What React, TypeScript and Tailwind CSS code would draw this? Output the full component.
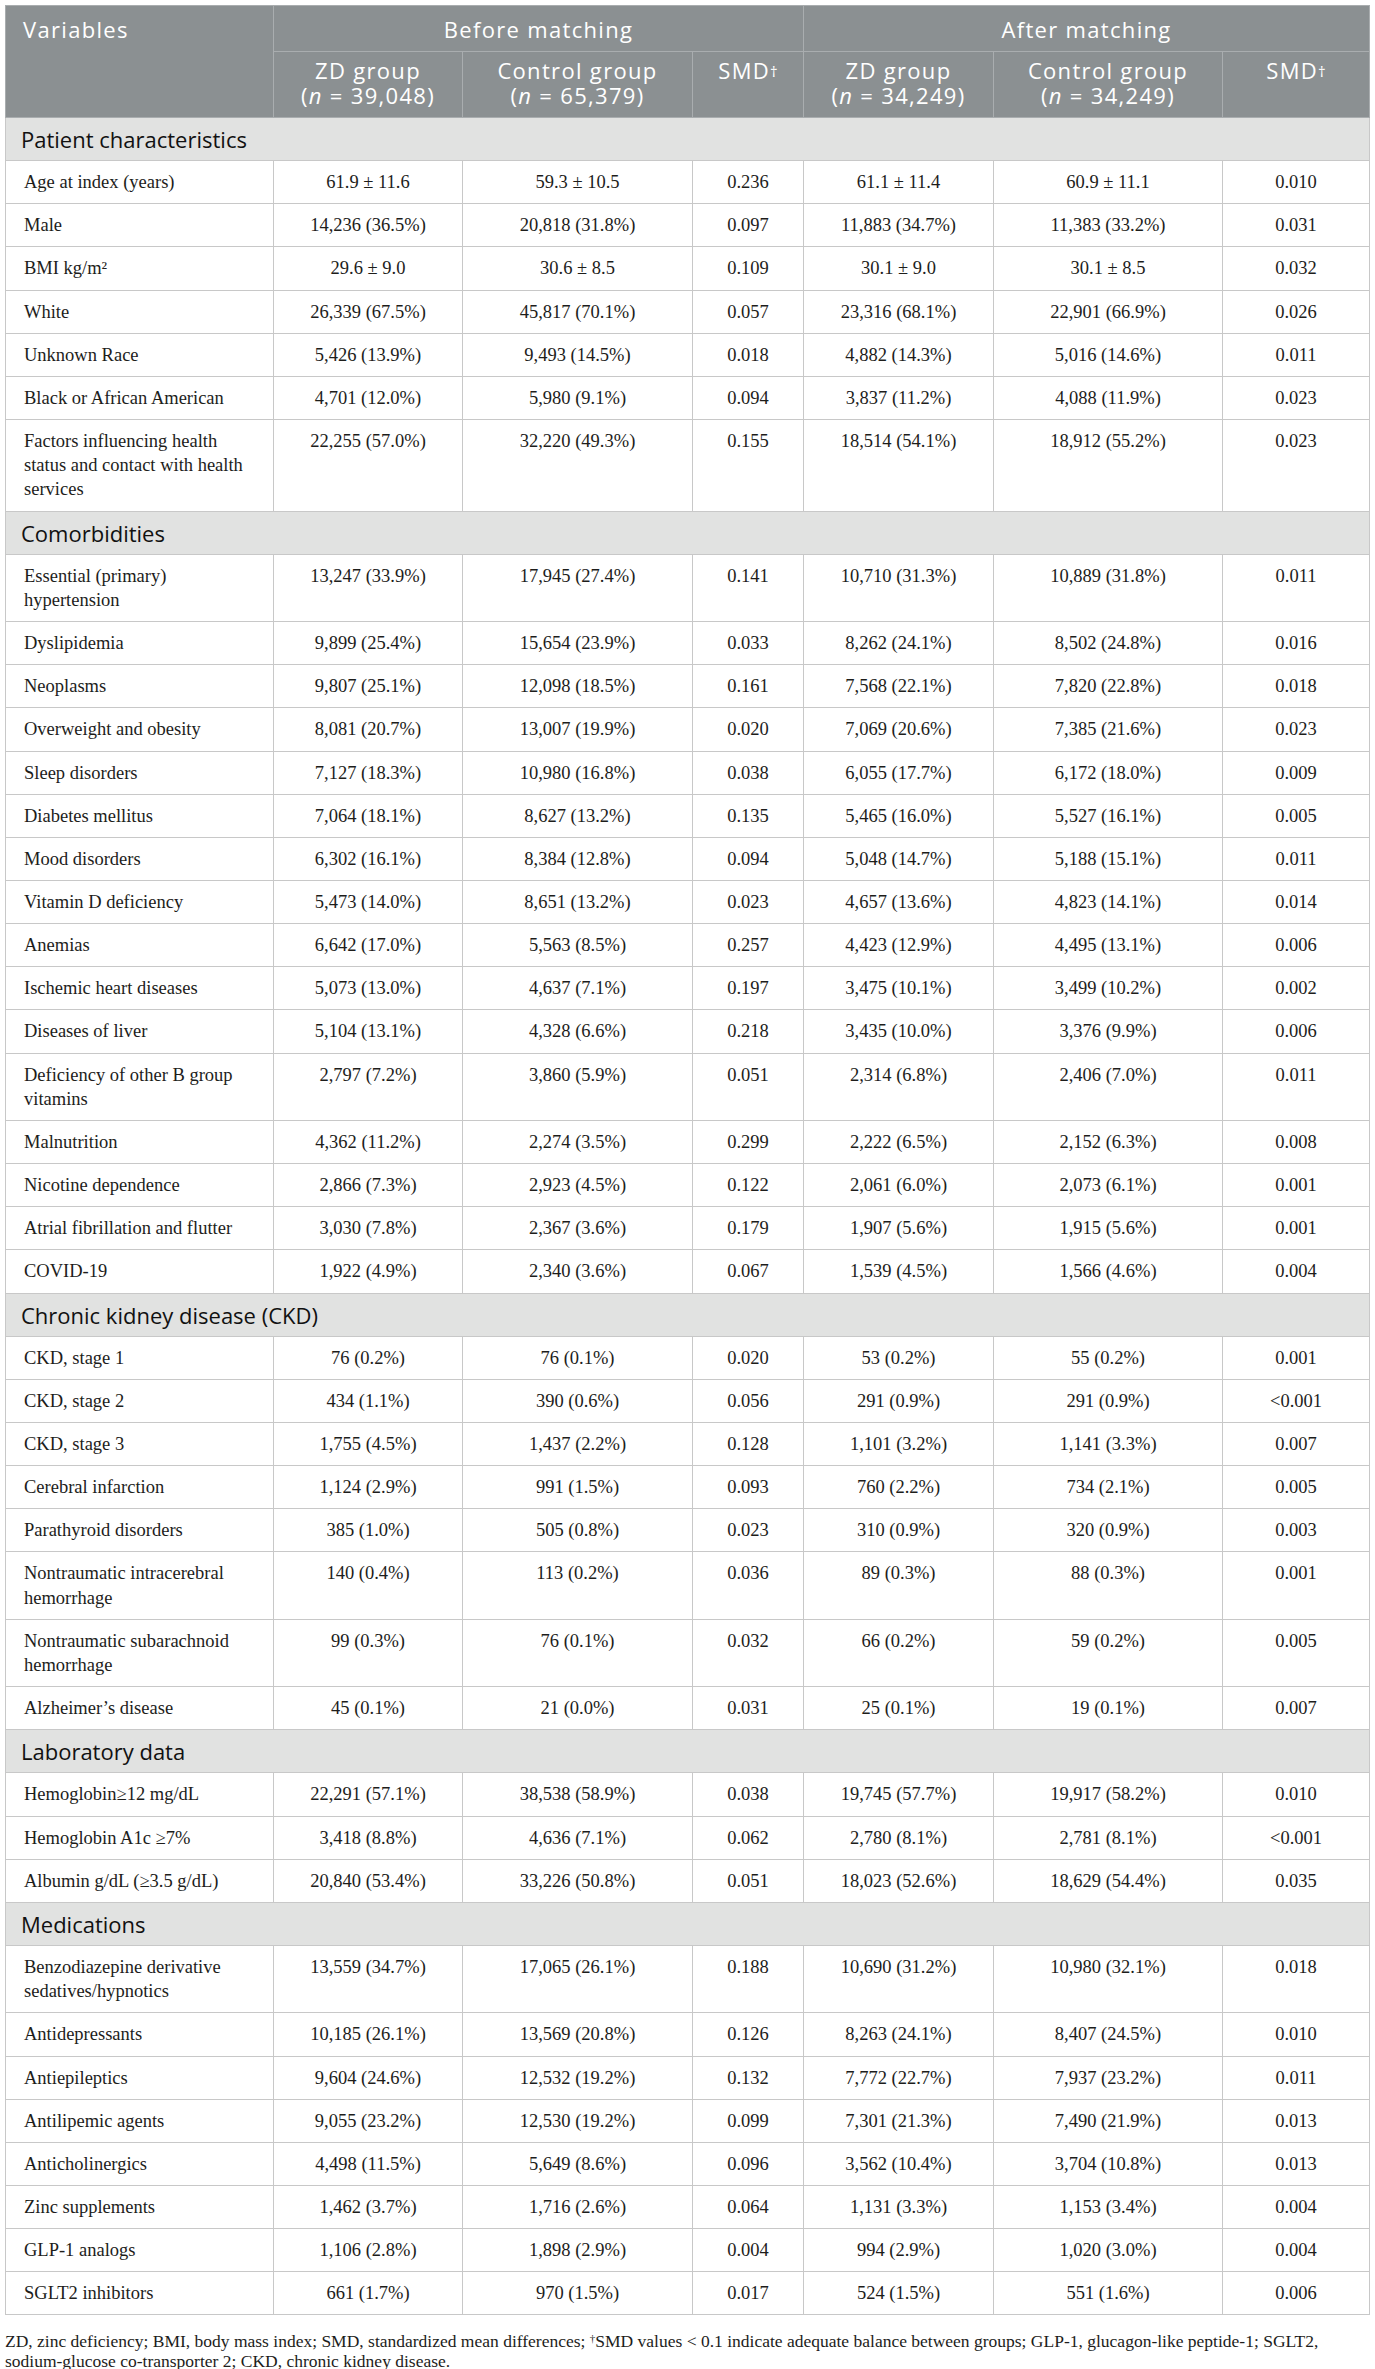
import React from "react";

type Row = { label: string[]; v: string[] };
type Section = { title: string; rows: Row[] };

const sections: Section[] = [
  {
    title: "Patient characteristics",
    rows: [
      { label: ["Age at index (years)"], v: ["61.9 ± 11.6", "59.3 ± 10.5", "0.236", "61.1 ± 11.4", "60.9 ± 11.1", "0.010"] },
      { label: ["Male"], v: ["14,236 (36.5%)", "20,818 (31.8%)", "0.097", "11,883 (34.7%)", "11,383 (33.2%)", "0.031"] },
      { label: ["BMI kg/m²"], v: ["29.6 ± 9.0", "30.6 ± 8.5", "0.109", "30.1 ± 9.0", "30.1 ± 8.5", "0.032"] },
      { label: ["White"], v: ["26,339 (67.5%)", "45,817 (70.1%)", "0.057", "23,316 (68.1%)", "22,901 (66.9%)", "0.026"] },
      { label: ["Unknown Race"], v: ["5,426 (13.9%)", "9,493 (14.5%)", "0.018", "4,882 (14.3%)", "5,016 (14.6%)", "0.011"] },
      { label: ["Black or African American"], v: ["4,701 (12.0%)", "5,980 (9.1%)", "0.094", "3,837 (11.2%)", "4,088 (11.9%)", "0.023"] },
      {
        label: ["Factors influencing health", "status and contact with health", "services"],
        v: ["22,255 (57.0%)", "32,220 (49.3%)", "0.155", "18,514 (54.1%)", "18,912 (55.2%)", "0.023"],
      },
    ],
  },
  {
    title: "Comorbidities",
    rows: [
      { label: ["Essential (primary)", "hypertension"], v: ["13,247 (33.9%)", "17,945 (27.4%)", "0.141", "10,710 (31.3%)", "10,889 (31.8%)", "0.011"] },
      { label: ["Dyslipidemia"], v: ["9,899 (25.4%)", "15,654 (23.9%)", "0.033", "8,262 (24.1%)", "8,502 (24.8%)", "0.016"] },
      { label: ["Neoplasms"], v: ["9,807 (25.1%)", "12,098 (18.5%)", "0.161", "7,568 (22.1%)", "7,820 (22.8%)", "0.018"] },
      { label: ["Overweight and obesity"], v: ["8,081 (20.7%)", "13,007 (19.9%)", "0.020", "7,069 (20.6%)", "7,385 (21.6%)", "0.023"] },
      { label: ["Sleep disorders"], v: ["7,127 (18.3%)", "10,980 (16.8%)", "0.038", "6,055 (17.7%)", "6,172 (18.0%)", "0.009"] },
      { label: ["Diabetes mellitus"], v: ["7,064 (18.1%)", "8,627 (13.2%)", "0.135", "5,465 (16.0%)", "5,527 (16.1%)", "0.005"] },
      { label: ["Mood disorders"], v: ["6,302 (16.1%)", "8,384 (12.8%)", "0.094", "5,048 (14.7%)", "5,188 (15.1%)", "0.011"] },
      { label: ["Vitamin D deficiency"], v: ["5,473 (14.0%)", "8,651 (13.2%)", "0.023", "4,657 (13.6%)", "4,823 (14.1%)", "0.014"] },
      { label: ["Anemias"], v: ["6,642 (17.0%)", "5,563 (8.5%)", "0.257", "4,423 (12.9%)", "4,495 (13.1%)", "0.006"] },
      { label: ["Ischemic heart diseases"], v: ["5,073 (13.0%)", "4,637 (7.1%)", "0.197", "3,475 (10.1%)", "3,499 (10.2%)", "0.002"] },
      { label: ["Diseases of liver"], v: ["5,104 (13.1%)", "4,328 (6.6%)", "0.218", "3,435 (10.0%)", "3,376 (9.9%)", "0.006"] },
      { label: ["Deficiency of other B group", "vitamins"], v: ["2,797 (7.2%)", "3,860 (5.9%)", "0.051", "2,314 (6.8%)", "2,406 (7.0%)", "0.011"] },
      { label: ["Malnutrition"], v: ["4,362 (11.2%)", "2,274 (3.5%)", "0.299", "2,222 (6.5%)", "2,152 (6.3%)", "0.008"] },
      { label: ["Nicotine dependence"], v: ["2,866 (7.3%)", "2,923 (4.5%)", "0.122", "2,061 (6.0%)", "2,073 (6.1%)", "0.001"] },
      { label: ["Atrial fibrillation and flutter"], v: ["3,030 (7.8%)", "2,367 (3.6%)", "0.179", "1,907 (5.6%)", "1,915 (5.6%)", "0.001"] },
      { label: ["COVID-19"], v: ["1,922 (4.9%)", "2,340 (3.6%)", "0.067", "1,539 (4.5%)", "1,566 (4.6%)", "0.004"] },
    ],
  },
  {
    title: "Chronic kidney disease (CKD)",
    rows: [
      { label: ["CKD, stage 1"], v: ["76 (0.2%)", "76 (0.1%)", "0.020", "53 (0.2%)", "55 (0.2%)", "0.001"] },
      { label: ["CKD, stage 2"], v: ["434 (1.1%)", "390 (0.6%)", "0.056", "291 (0.9%)", "291 (0.9%)", "<0.001"] },
      { label: ["CKD, stage 3"], v: ["1,755 (4.5%)", "1,437 (2.2%)", "0.128", "1,101 (3.2%)", "1,141 (3.3%)", "0.007"] },
      { label: ["Cerebral infarction"], v: ["1,124 (2.9%)", "991 (1.5%)", "0.093", "760 (2.2%)", "734 (2.1%)", "0.005"] },
      { label: ["Parathyroid disorders"], v: ["385 (1.0%)", "505 (0.8%)", "0.023", "310 (0.9%)", "320 (0.9%)", "0.003"] },
      { label: ["Nontraumatic intracerebral", "hemorrhage"], v: ["140 (0.4%)", "113 (0.2%)", "0.036", "89 (0.3%)", "88 (0.3%)", "0.001"] },
      { label: ["Nontraumatic subarachnoid", "hemorrhage"], v: ["99 (0.3%)", "76 (0.1%)", "0.032", "66 (0.2%)", "59 (0.2%)", "0.005"] },
      { label: ["Alzheimer’s disease"], v: ["45 (0.1%)", "21 (0.0%)", "0.031", "25 (0.1%)", "19 (0.1%)", "0.007"] },
    ],
  },
  {
    title: "Laboratory data",
    rows: [
      { label: ["Hemoglobin≥12 mg/dL"], v: ["22,291 (57.1%)", "38,538 (58.9%)", "0.038", "19,745 (57.7%)", "19,917 (58.2%)", "0.010"] },
      { label: ["Hemoglobin A1c ≥7%"], v: ["3,418 (8.8%)", "4,636 (7.1%)", "0.062", "2,780 (8.1%)", "2,781 (8.1%)", "<0.001"] },
      { label: ["Albumin g/dL (≥3.5 g/dL)"], v: ["20,840 (53.4%)", "33,226 (50.8%)", "0.051", "18,023 (52.6%)", "18,629 (54.4%)", "0.035"] },
    ],
  },
  {
    title: "Medications",
    rows: [
      {
        label: ["Benzodiazepine derivative", "sedatives/hypnotics"],
        v: ["13,559 (34.7%)", "17,065 (26.1%)", "0.188", "10,690 (31.2%)", "10,980 (32.1%)", "0.018"],
      },
      { label: ["Antidepressants"], v: ["10,185 (26.1%)", "13,569 (20.8%)", "0.126", "8,263 (24.1%)", "8,407 (24.5%)", "0.010"] },
      { label: ["Antiepileptics"], v: ["9,604 (24.6%)", "12,532 (19.2%)", "0.132", "7,772 (22.7%)", "7,937 (23.2%)", "0.011"] },
      { label: ["Antilipemic agents"], v: ["9,055 (23.2%)", "12,530 (19.2%)", "0.099", "7,301 (21.3%)", "7,490 (21.9%)", "0.013"] },
      { label: ["Anticholinergics"], v: ["4,498 (11.5%)", "5,649 (8.6%)", "0.096", "3,562 (10.4%)", "3,704 (10.8%)", "0.013"] },
      { label: ["Zinc supplements"], v: ["1,462 (3.7%)", "1,716 (2.6%)", "0.064", "1,131 (3.3%)", "1,153 (3.4%)", "0.004"] },
      { label: ["GLP-1 analogs"], v: ["1,106 (2.8%)", "1,898 (2.9%)", "0.004", "994 (2.9%)", "1,020 (3.0%)", "0.004"] },
      { label: ["SGLT2 inhibitors"], v: ["661 (1.7%)", "970 (1.5%)", "0.017", "524 (1.5%)", "551 (1.6%)", "0.006"] },
    ],
  },
];

const th =
  "border border-[#a9adaf] px-2 pt-[6px] pb-[9px] align-top text-center font-normal leading-[25px]";
const td = "border border-[#c8c8c8] px-2 py-[9px] align-top text-center leading-[24.15px]";

function GroupHead({ name, n }: { name: string; n: string }) {
  return (
    <th className={th}>
      {name}
      <br />
      (<i>n</i> = {n})
    </th>
  );
}

function SmdHead() {
  return (
    <th className={th}>
      SMD<sup className="relative -top-[2px] text-[15px] tracking-normal">†</sup>
    </th>
  );
}

export default function App() {
  return (
    <div className="min-h-screen bg-white p-[5px] pr-[6px]">
      <table className="w-[1364px] table-fixed border-collapse font-['Liberation_Serif',serif] text-[18.5px] text-[#1d1d1b]">
        <colgroup>
          <col className="w-[268px]" />
          <col className="w-[189px]" />
          <col className="w-[230px]" />
          <col className="w-[111px]" />
          <col className="w-[190px]" />
          <col className="w-[229px]" />
          <col className="w-[147px]" />
        </colgroup>
        <thead className="bg-[#8b9092] font-['Open_Sans',sans-serif] text-[22px] tracking-[0.06em] text-white">
          <tr>
            <th rowSpan={2} className={`${th} pt-[11px] pl-[17px] text-left`}>
              Variables
            </th>
            <th colSpan={3} className={`${th} pt-[11px]`}>
              Before matching
            </th>
            <th colSpan={3} className={`${th} pt-[11px]`}>
              After matching
            </th>
          </tr>
          <tr>
            <GroupHead name="ZD group" n="39,048" />
            <GroupHead name="Control group" n="65,379" />
            <SmdHead />
            <GroupHead name="ZD group" n="34,249" />
            <GroupHead name="Control group" n="34,249" />
            <SmdHead />
          </tr>
        </thead>
        <tbody>
          {sections.map((s) => (
            <React.Fragment key={s.title}>
              <tr className="bg-[#e1e2e1]">
                <td
                  colSpan={7}
                  className="border border-[#c8c8c8] py-[9px] pl-[15px] font-['Open_Sans',sans-serif] text-[22px] leading-[24.15px] text-[#111]"
                >
                  {s.title}
                </td>
              </tr>
              {s.rows.map((r) => (
                <tr key={r.label.join(" ")}>
                  <td className={`${td} pl-[18px] text-left`}>
                    {r.label.map((l, i) => (
                      <span key={i} className="block whitespace-nowrap">
                        {l}
                      </span>
                    ))}
                  </td>
                  {r.v.map((v, i) => (
                    <td key={i} className={td}>
                      {v}
                    </td>
                  ))}
                </tr>
              ))}
            </React.Fragment>
          ))}
        </tbody>
      </table>
      <p className="mt-[16px] font-['Liberation_Serif',serif] text-[17.5px] leading-[20px] text-[#1d1d1b]">
        <span className="block whitespace-nowrap">
          ZD, zinc deficiency; BMI, body mass index; SMD, standardized mean differences;{" "}
          <sup className="text-[11px]">†</sup>SMD values &lt; 0.1 indicate adequate balance between
          groups; GLP-1, glucagon-like peptide-1; SGLT2,
        </span>
        <span className="block whitespace-nowrap">
          sodium-glucose co-transporter 2; CKD, chronic kidney disease.
        </span>
      </p>
    </div>
  );
}
